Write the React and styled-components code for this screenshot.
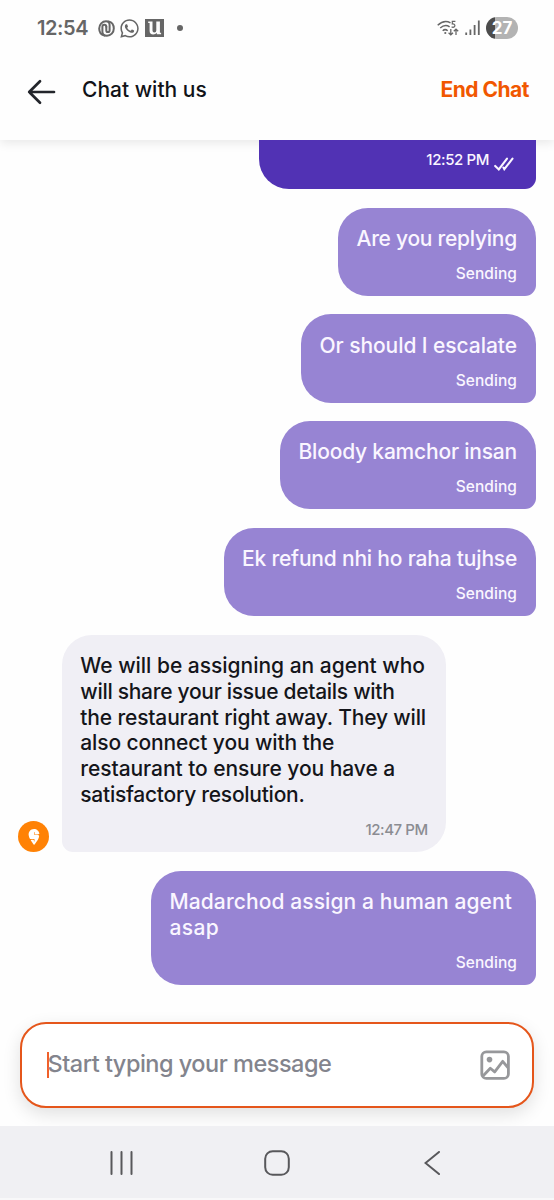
import styled, { createGlobalStyle } from "styled-components";
import { FaWhatsapp } from "react-icons/fa";
import { SiSwiggy } from "react-icons/si";

const GlobalStyle = createGlobalStyle`
    * { box-sizing: border-box; }
    body { margin: 0; background-color: #fff; font-family: Inter, "Liberation Sans", sans-serif; }
    svg { display: block; flex: none; }
`

const Screen = styled.div`
    display: flex;
    flex-direction: column;
    width: 554px;
    height: 1200px;
    overflow: hidden;
    background-color: #fefefe;
`

const StatusBar = styled.div`
    display: flex;
    align-items: center;
    justify-content: space-between;
    height: 56px;
    padding: 0 36px 0 37px;
    color: #666;
`

const StatusGroup = styled.div`
    display: flex;
    align-items: center;
    gap: ${({ $gap }) => $gap}px;
`

const Text = styled.span`
    font-size: ${({ $size }) => $size}px;
    font-weight: ${({ $weight }) => $weight || 500};
    letter-spacing: ${({ $track }) => $track || 0}px;
    white-space: nowrap;
`

const Clock = styled(Text)`
    width: 56px;
`

const Dot = styled.i`
    width: 6px;
    height: 6px;
    margin-left: 8px;
    border-radius: 50%;
    background-color: #666;
`

const Battery = styled.div`
    display: flex;
    align-items: center;
    justify-content: center;
    width: 32px;
    height: 22px;
    border-radius: 11px;
    background: linear-gradient(to right, #4c4c4c 27%, #b3b3b3 27%);
    color: #fff;
`

const Header = styled.header`
    display: flex;
    align-items: center;
    height: 84px;
    padding: 0 25px 17px 27px;
    box-shadow: 0 3px 10px rgba(0, 0, 0, 0.09);
    clip-path: inset(0 0 -16px 0);

    svg {
        margin-top: 4px;
    }
`

const Title = styled.div`
    flex: 1;
    margin-left: 26px;
    color: #111318;
`

const EndChat = styled.div`
    color: #f15700;
`

const Messages = styled.main`
    z-index: 1;
    display: flex;
    flex-direction: column;
    justify-content: flex-end;
    gap: 18.5px;
    height: 863px;
    padding: 0 18.5px 18px 18.3px;
    overflow: hidden;
`

const MessageRow = styled.div`
    display: flex;
    align-items: flex-end;
    justify-content: ${({ $mine }) => $mine ? 'flex-end' : 'flex-start'};
    gap: 12.5px;
`

const Bubble = styled.div`
    display: flex;
    flex-direction: column;
    width: ${({ $width }) => $width}px;
    padding: 18.2px 18.5px 12px;
    border-radius: ${({ $mine }) => $mine ? '30px 30px 11px 30px' : '30px 30px 30px 11px'};
    background-color: ${({ $mine, $sent }) => $sent ? '#5132b4' : $mine ? '#9784d3' : '#f0eff5'};
    color: ${({ $mine }) => $mine ? '#faf6ff' : '#14151a'};
`

const Line = styled(Text)`
    height: ${({ $mine }) => $mine ? 26.2 : 25.9}px;
    line-height: 26px;
`

const Meta = styled.div`
    display: flex;
    justify-content: flex-end;
    gap: 5px;
    height: 20px;
    margin-top: 11.9px;
    line-height: 20px;
    color: ${({ $mine }) => $mine ? 'inherit' : '#8b8c92'};
`

const SentMeta = styled(Meta)`
    height: 27.2px;
    padding-right: 3px;

    svg {
        margin-top: 7px;
    }
`

const Avatar = styled.div`
    display: flex;
    align-items: center;
    justify-content: center;
    width: 31px;
    height: 31px;
    border-radius: 50%;
    background-color: #ff8205;
    color: #fff;
`

const Composer = styled.div`
    display: flex;
    flex: none;
    height: 123px;
    padding: 19px 20px 18px;
`

const Field = styled.div`
    display: flex;
    align-items: center;
    width: 514px;
    height: 86px;
    padding: 0 22px 0 25px;
    border: 2px solid #e5561b;
    border-radius: 26px;
    background-color: #fff;
    box-shadow: 0 6px 18px rgba(0, 0, 0, 0.12);
    color: #83848d;
`

const Caret = styled.div`
    flex: none;
    width: 1.5px;
    height: 26px;
    background-color: #f0602a;
`

const Placeholder = styled.div`
    flex: 1;
    margin-left: -1px;
    padding-bottom: 3px;
`

const NavBar = styled.nav`
    z-index: 1;
    display: flex;
    align-items: center;
    justify-content: space-between;
    height: 74px;
    padding: 2px 114px 0 109px;
    border-bottom: 2px solid #f8f8f9;
    background-color: #f0f0f3;
`

const HomeIcon = styled.svg`
    margin-right: 4px;
`

const messages = [
    { mine: true, width: 197.5, lines: [['Are you replying', -0.26]], meta: 'Sending' },
    { mine: true, width: 234.5, lines: [['Or should I escalate', -0.06]], meta: 'Sending' },
    { mine: true, width: 255.5, lines: [['Bloody kamchor insan', -0.2]], meta: 'Sending' },
    { mine: true, width: 312, lines: [['Ek refund nhi ho raha tujhse', -0.19]], meta: 'Sending' },
    {
        mine: false,
        width: 384.5,
        lines: [
            ['We will be assigning an agent who', -0.02],
            ['will share your issue details with', -0.29],
            ['the restaurant right away. They will', -0.16],
            ['also connect you with the', -0.12],
            ['restaurant to ensure you have a', -0.06],
            ['satisfactory resolution.', -0.26],
        ],
        meta: '12:47 PM',
    },
    { mine: true, width: 384.5, lines: [['Madarchod assign a human agent', 0.1], ['asap', 0.4]], meta: 'Sending' },
]

const SwirlIcon = () => (
    <svg width="17" height="17" viewBox="0 0 17 17" fill="none" stroke="#666" strokeWidth="2" strokeLinecap="round">
        <path d="M6.5 15.6C3 14.7 1.2 12 1.2 8.5 1.2 4.4 4.3 1.2 8 1.2c2.3 0 3.6 1.4 3.6 3.7v5.3c0 1.2-.8 1.9-1.7 1.9s-1.6-.7-1.6-1.9V6.8" />
        <path d="M10.5 1.4C14 2.3 15.8 5 15.8 8.5c0 4.1-3.1 7.3-6.8 7.3-3 0-4.6-1.4-4.6-4V6.8c0-1.3.8-2.1 1.9-2.1s2 .8 2 2.1" />
    </svg>
)

const UIcon = () => (
    <svg width="19" height="18" viewBox="0 0 19 18">
        <rect width="19" height="18" fill="#666" />
        <path d="M3.2 2.5h4.3v9q0 1.9 1.8 1.9 2 0 2-1.9v-9h3.6v11.2h1.2v1.6h-4.3v-1.5q-1.2 1.8-3.6 1.8-3.6 0-3.6-3.8V4.1H3.2z" fill="#fefefe" />
    </svg>
)

const WifiIcon = () => (
    <svg width="22" height="17" viewBox="0 0 22 17" fill="none" stroke="#666" strokeWidth="1.5">
        <path d="M.7 5.2Q7-.8 13.5 2.8M3.2 8Q8 3.7 12.6 6.8M5.7 10.7q2.5-2.1 5 0" />
        <circle cx="8.3" cy="13" r="1.1" fill="#666" stroke="none" />
        <path d="M18.4 1.4h-3.1v2.5c3-.7 3.6 3.4.6 3.4q-.7 0-1.3-.5" strokeWidth="1.2" />
        <path d="M13.8 9v5.8m-2.2-2.1 2.2 2.2 2.2-2.2M19 15V9.2m-2.2 2.1L19 9.1l2.2 2.2" strokeWidth="1.3" />
    </svg>
)

const SignalIcon = () => (
    <svg width="15" height="16" viewBox="0 0 15 16" stroke="#666" strokeWidth="1.8">
        <path d="M1.2 12.5V15M5.4 9.5V15M9.6 5V15M13.8.5V15" />
    </svg>
)

const BackIcon = () => (
    <svg width="29" height="26" viewBox="0 0 29 26" fill="none" stroke="#23252b" strokeWidth="2.7" strokeLinecap="round" strokeLinejoin="round">
        <path d="M27 13H2.2M13 2.2 2.2 13 13 23.8" />
    </svg>
)

const TicksIcon = () => (
    <svg width="20" height="14" viewBox="0 0 20 14" fill="none" stroke="#faf6ff" strokeWidth="2.1" strokeLinecap="round">
        <path d="m1.2 8.9 3.6 3.5L13 1.7M9.4 10.6l.9 1.6 8.2-10.5" />
    </svg>
)

const ImageIcon = () => (
    <svg width="30" height="30" viewBox="0 0 30 30" fill="none" stroke="#97989b" strokeWidth="2.8" strokeLinejoin="round">
        <rect x="1.8" y="1.8" width="26.6" height="26.6" rx="4.5" />
        <circle cx="9.5" cy="9.6" r="2.8" fill="#97989b" stroke="none" />
        <path d="m3 26 7.3-7.8 4.4 3.7 8-10.6 5.2 6.2" />
    </svg>
)

const App = () => {
    return (
        <Screen>
            <GlobalStyle />
            <StatusBar>
                <StatusGroup $gap={4.7}>
                    <Clock $size={20} $weight={600} $track={-0.4}>12:54</Clock>
                    <SwirlIcon />
                    <FaWhatsapp size={21} />
                    <UIcon />
                    <Dot />
                </StatusGroup>
                <StatusGroup $gap={6}>
                    <WifiIcon />
                    <SignalIcon />
                    <Battery><Text $size={17} $weight={700}>27</Text></Battery>
                </StatusGroup>
            </StatusBar>
            <Header>
                <BackIcon />
                <Title><Text $size={21}>Chat with us</Text></Title>
                <EndChat><Text $size={21} $weight={700} $track={-0.5}>End Chat</Text></EndChat>
            </Header>
            <Messages>
                <MessageRow $mine>
                    <Bubble $mine $sent $width={276.5}>
                        <Line $mine $size={21}>&nbsp;</Line>
                        <SentMeta $mine><Text $size={15} $track={-0.4}>12:52 PM</Text><TicksIcon /></SentMeta>
                    </Bubble>
                </MessageRow>
                {messages.map(({ mine, width, lines, meta }, index) => (
                    <MessageRow key={index} $mine={mine}>
                        {!mine && <Avatar><SiSwiggy size={16} /></Avatar>}
                        <Bubble $mine={mine} $width={width}>
                            {lines.map(([text, track]) => (
                                <Line key={text} $mine={mine} $size={21} $track={track}>{text}</Line>
                            ))}
                            <Meta $mine={mine}>
                                <Text $size={mine ? 15.5 : 15} $track={mine ? 0.05 : -0.42}>{meta}</Text>
                            </Meta>
                        </Bubble>
                    </MessageRow>
                ))}
            </Messages>
            <Composer>
                <Field>
                    <Caret />
                    <Placeholder><Text $size={23.5} $track={-0.5}>Start typing your message</Text></Placeholder>
                    <ImageIcon />
                </Field>
            </Composer>
            <NavBar>
                <svg width="24" height="24" viewBox="0 0 24 24" stroke="#58585b" strokeWidth="2" strokeLinecap="round"><path d="M2.5 1v22M12.5 1v22M22.5 1v22" /></svg>
                <HomeIcon width="26" height="26" viewBox="0 0 26 26" fill="none" stroke="#58585b" strokeWidth="2"><rect x="1.2" y="1.2" width="23.6" height="23.6" rx="7.5" /></HomeIcon>
                <svg width="16" height="24" viewBox="0 0 16 24" fill="none" stroke="#58585b" strokeWidth="2" strokeLinecap="round"><path d="M15 1 1.5 12 15 23" /></svg>
            </NavBar>
        </Screen>
    )
}

export default App;
